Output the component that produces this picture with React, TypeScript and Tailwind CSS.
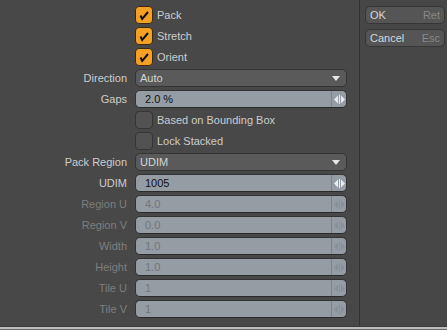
import React from "react";

const font = { fontFamily: '"Liberation Sans", Arial, sans-serif' };

function Check({ checked }: { checked: boolean }) {
  return checked ? (
    <div className="w-[18px] h-[18px] rounded-[4px] bg-[#f4a025] border border-[#3a2a10] flex items-center justify-center">
      <svg width="12" height="12" viewBox="0 0 12 12">
        <path d="M2.5 6.5 L4.2 10 L10 3" fill="none" stroke="#111" strokeWidth="2" strokeLinejoin="miter" />
      </svg>
    </div>
  ) : (
    <div className="w-[18px] h-[18px] rounded-[4px] bg-[#525252] border border-[#353535]" />
  );
}

function Arrows({ disabled }: { disabled?: boolean }) {
  const c = disabled ? "#8a9098" : "#e8ecef";
  return (
    <svg width="11" height="9" viewBox="0 0 11 9">
      <path d="M0 4.5 L4 0.5 L4 8.5 Z" fill={c} />
      <rect x="5" y="0" width="1" height="9" fill={c} />
      <path d="M11 4.5 L7 0.5 L7 8.5 Z" fill={c} />
    </svg>
  );
}

function Row({ label, disabled, children }: { label?: string; disabled?: boolean; children: React.ReactNode }) {
  return (
    <div className="flex h-[21px] items-start">
      <div
        className={`w-[131px] h-[18px] pr-[4px] flex items-center justify-end text-[11px] ${disabled ? "text-[#7e7e7e]" : "text-[#cdcdcd]"}`}
      >
        {label}
      </div>
      <div className="ml-[4px] w-[212px]">{children}</div>
    </div>
  );
}

function CheckRow({ label, checked }: { label: string; checked: boolean }) {
  return (
    <Row>
      <div className="flex items-center h-[18px] gap-[4px]">
        <Check checked={checked} />
        <span className="text-[11px] text-[#cdcdcd]">{label}</span>
      </div>
    </Row>
  );
}

function Dropdown({ label, value }: { label: string; value: string }) {
  return (
    <Row label={label}>
      <div className="h-[18px] rounded-[5px] bg-[#5a5a5a] border border-[#343434] flex items-center pl-[4px] pr-[6px]">
        <span className="flex-1 text-[11px] text-[#d4d4d4]">{value}</span>
        <svg width="8" height="5" viewBox="0 0 8 5">
          <path d="M0 0 L8 0 L4 5 Z" fill="#e6e6e6" />
        </svg>
      </div>
    </Row>
  );
}

function NumField({ label, value, disabled }: { label: string; value: string; disabled?: boolean }) {
  return (
    <Row label={label} disabled={disabled}>
      <div className="h-[18px] rounded-[5px] bg-[#959ca4] border border-[#333] border-b-[#2a2a2a] flex items-stretch overflow-hidden">
        <span className={`flex-1 pl-[9px] flex items-center text-[11px] ${disabled ? "text-[#70767d]" : "text-[#111]"}`}>{value}</span>
        <div className="w-[15px] border-l border-[#7b838b] flex items-center justify-center">
          <Arrows disabled={disabled} />
        </div>
      </div>
    </Row>
  );
}

function Btn({ label, hint }: { label: string; hint: string }) {
  return (
    <div className="h-[18px] rounded-[5px] bg-[#555555] border border-[#363636] flex items-center justify-between px-[4px] text-[11px]">
      <span className="text-[#d6d6d6]">{label}</span>
      <span className="text-[#888888]">{hint}</span>
    </div>
  );
}

export default function App() {
  return (
    <div style={font} className="w-[447px] h-[330px] bg-[#484848] flex flex-col overflow-hidden">
      <div className="flex flex-1">
        <div className="w-[359px] pt-[6px]">
          <CheckRow label="Pack" checked />
          <CheckRow label="Stretch" checked />
          <CheckRow label="Orient" checked />
          <Dropdown label="Direction" value="Auto" />
          <NumField label="Gaps" value="2.0 %" />
          <CheckRow label="Based on Bounding Box" checked={false} />
          <CheckRow label="Lock Stacked" checked={false} />
          <Dropdown label="Pack Region" value="UDIM" />
          <NumField label="UDIM" value="1005" />
          <NumField label="Region U" value="4.0" disabled />
          <NumField label="Region V" value="0.0" disabled />
          <NumField label="Width" value="1.0" disabled />
          <NumField label="Height" value="1.0" disabled />
          <NumField label="Tile U" value="1" disabled />
          <NumField label="Tile V" value="1" disabled />
        </div>
        <div className="w-[1px] bg-[#333333]" />
        <div className="flex-1 pt-[6px] pl-[5px] pr-[2px] flex flex-col gap-[5px] bg-[#474747]">
          <Btn label="OK" hint="Ret" />
          <Btn label="Cancel" hint="Esc" />
        </div>
      </div>
      <div className="h-[1px] bg-[#3a3a3a]" />
      <div className="h-[2px] bg-[#bdbdbd]" />
      <div className="h-[1px] bg-[#6a6a6a]" />
    </div>
  );
}
